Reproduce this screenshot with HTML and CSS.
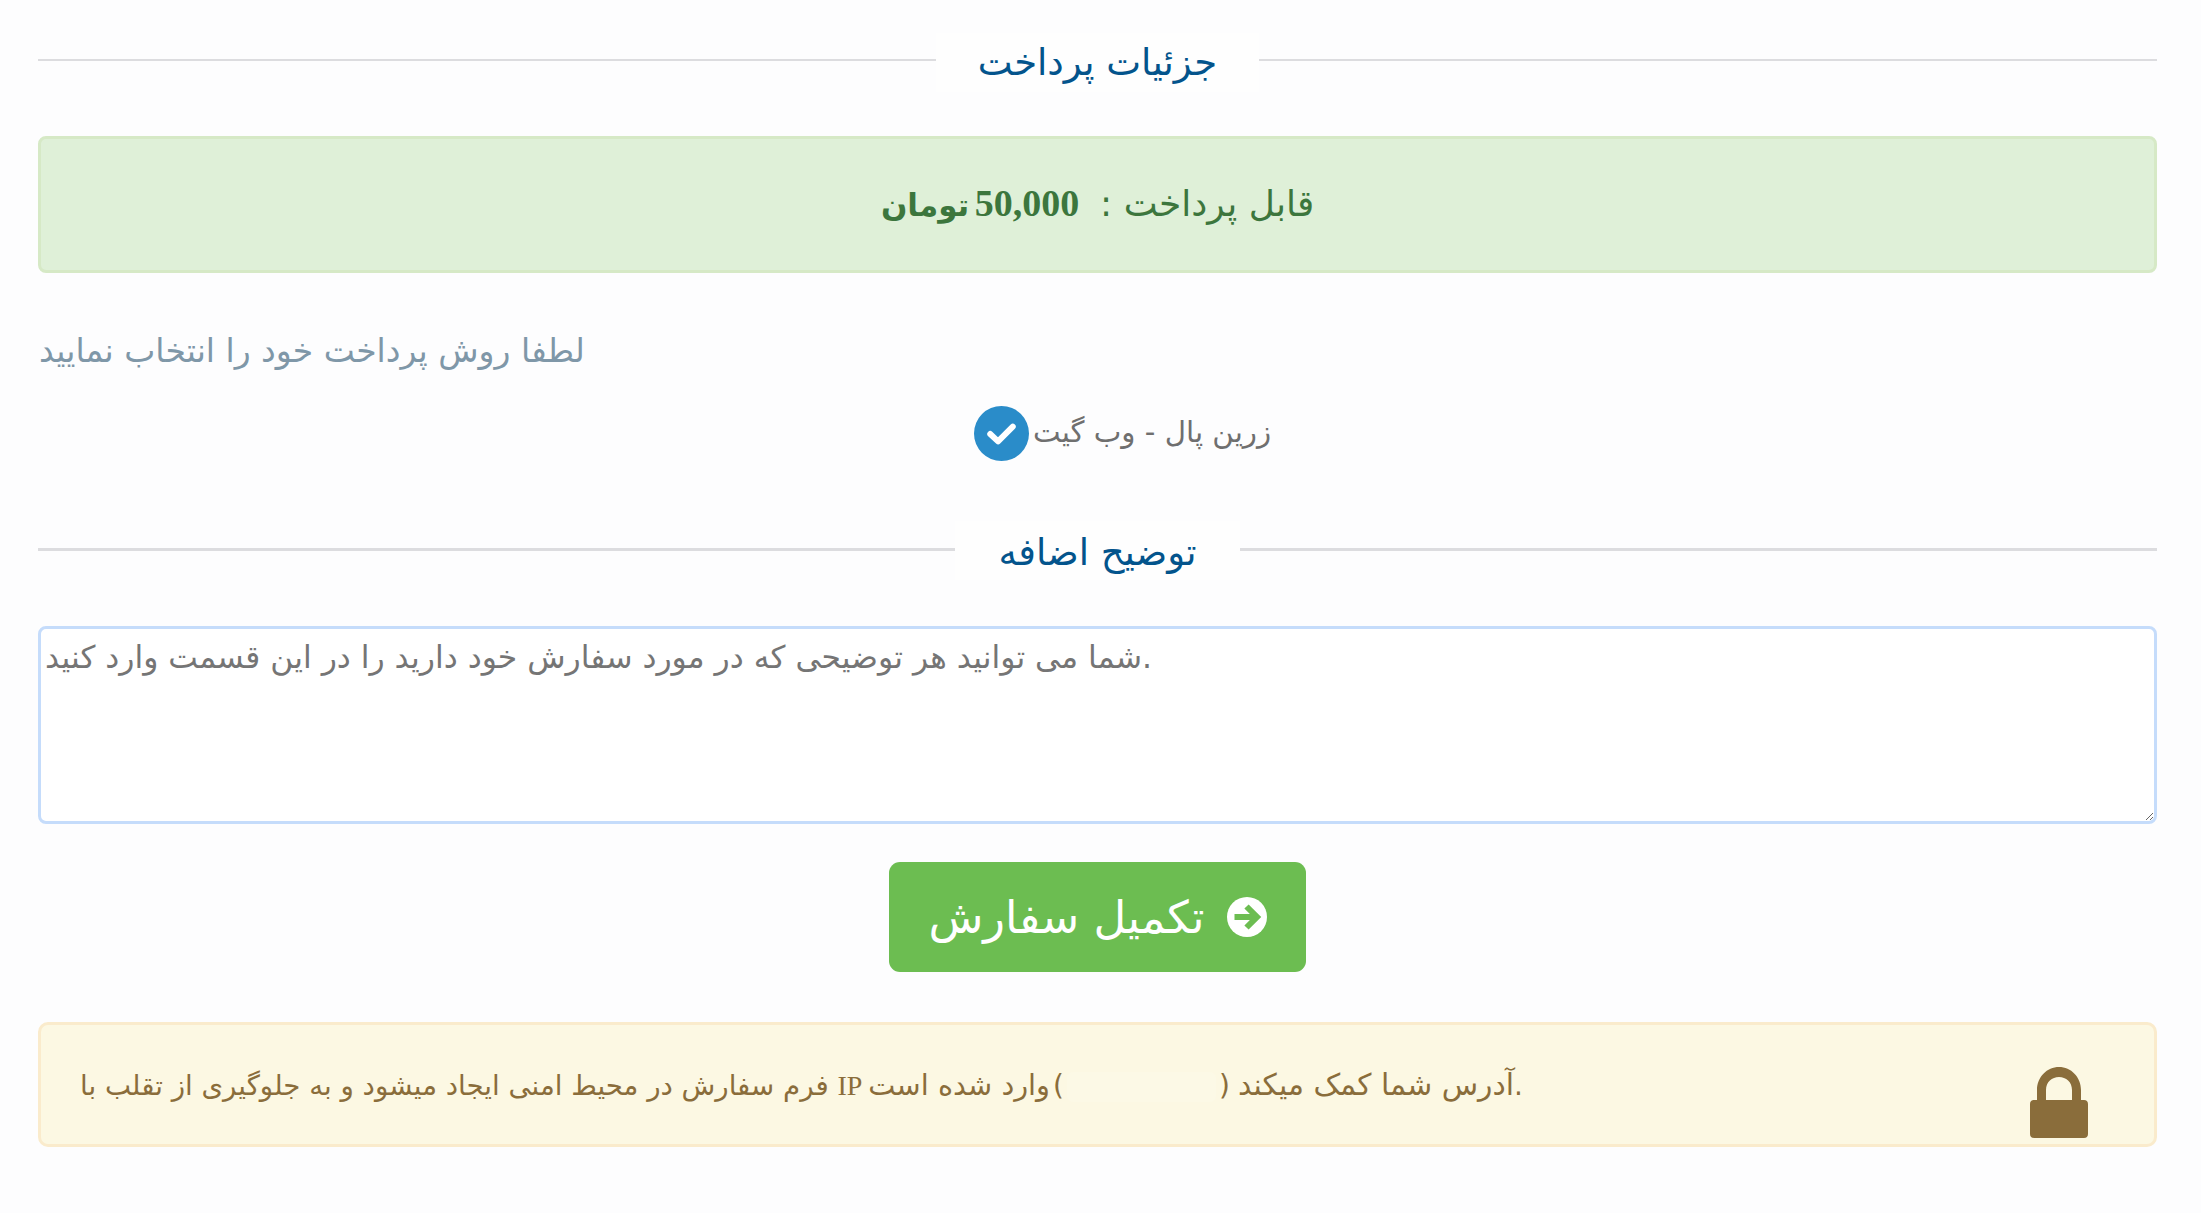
FILE: index.html
```html
<!DOCTYPE html>
<html lang="fa">
<head>
<meta charset="utf-8">
<title>جزئیات پرداخت</title>
<link rel="stylesheet" href="styles.css">
</head>
<body>
<main class="page">
  <div class="divider divider-first"><span class="divider-title">جزئیات پرداخت</span></div>
  <div class="payable"><span dir="rtl" class="payable-text">قابل پرداخت : &nbsp;<b class="amount">50,000</b> <b class="currency">تومان</b></span></div>
  <p class="choose">لطفا روش پرداخت خود را انتخاب نمایید</p>
  <div class="gateway">
    <svg class="check" viewBox="0 0 56 56" aria-hidden="true"><circle cx="28" cy="28" r="28" fill="#2a8cc9"/><path d="M16.5 28.5 L24.5 36 L39.5 21" fill="none" stroke="#fff" stroke-width="6" stroke-linecap="round" stroke-linejoin="round"/></svg>
    <span class="gateway-name">زرین پال - وب گیت</span>
  </div>
  <div class="divider divider-second"><span class="divider-title title-wide">توضیح اضافه</span></div>
  <textarea class="notes" placeholder="شما می توانید هر توضیحی که در مورد سفارش خود دارید را در این قسمت وارد کنید."></textarea>
  <div class="actions">
    <button class="submit" type="button">
      <span class="submit-label">تکمیل سفارش</span>
      <svg class="arrow" viewBox="0 0 40 40" aria-hidden="true"><circle cx="20" cy="20" r="20" fill="#fff"/><path d="M7.500 20 H28 M19.500 9.500 L30 20 L19.500 30.500" fill="none" stroke="#6cbd51" stroke-width="6" stroke-linejoin="miter"/></svg>
    </button>
  </div>
  <div class="secure">
    <p class="secure-text"><bdi class="run-first">فرم سفارش در محیط امنی ایجاد میشود و به جلوگیری از تقلب با</bdi> <span class="latin">IP</span> <bdi class="run-middle">وارد شده است</bdi><bdi dir="ltr" class="paren">(</bdi><span class="ip"></span><bdi dir="ltr" class="paren">)</bdi><bdi class="run-last">آدرس شما کمک میکند</bdi>.</p>
    <svg class="lock" viewBox="0 0 58 71" aria-hidden="true"><path fill="#8a6d3b" fill-rule="evenodd" d="M7 33V23C7 10 17 0 29 0S51 10 51 23V33H54C56.500 33 58 34.500 58 37V67C58 69.500 56.500 71 54 71H4C1.500 71 0 69.500 0 67V37C0 34.500 1.500 33 4 33ZM16 33H42V23C42 15 36 10 29 10S16 15 16 23Z"/></svg>
  </div>
</main>
</body>
</html>
```
FILE: styles.css
```css
html, body { margin: 0; padding: 0; }
body {
  background: #fdfdfe;
  font-family: "DejaVu Sans", sans-serif;
  color: #6f6f6f;
}
.page {
  padding: 33px 44px 0 38px;
  display: flex;
  flex-direction: column;
}
.divider {
  display: flex;
  align-items: center;
  justify-content: center;
  height: 59px;
}
.divider::before, .divider::after {
  content: "";
  flex: 1;
  height: 2px;
  background: #dcdcdf;
  margin-top: -5px;
}
.divider-second::before, .divider-second::after { height: 3px; margin-top: -2px; }
.divider-title {
  background: #fefefe;
  color: #03548c;
  font-size: 37px;
  line-height: 59px;
  height: 59px;
  text-align: center;
  direction: rtl;
  width: 323px;
}
.title-wide { width: 285px; line-height: 63px; }
.payable {
  margin-top: 44px;
  height: 137px;
  box-sizing: border-box;
  background: #dff0d8;
  border: 3px solid #d6e9c6;
  border-radius: 8px;
  color: #3c763d;
  font-size: 36px;
  display: flex;
  align-items: center;
  justify-content: center;
  padding-bottom: 3px;
}
.amount { font-family: "Liberation Serif", serif; font-weight: 700; font-size: 38px; margin-right: -2px; margin-left: -6px; }
.currency { font-size: 31px; }
.choose {
  margin: 56px 0 0;
  padding-left: 1px;
  color: #7f97a8;
  font-size: 33px;
  line-height: 44px;
  text-align: left;
  unicode-bidi: plaintext;
}
.gateway {
  display: flex;
  align-items: center;
  justify-content: center;
  gap: 4px;
  margin-top: 33px;
  height: 55px;
  padding-left: 52px;
}
.check { width: 55px; height: 55px; flex: none; margin-left: -2px; }
.gateway-name { font-size: 29.300px; direction: rtl; margin-bottom: 4px; }
.divider-second { margin-top: 60px; }
.notes {
  display: block;
  margin-top: 46px;
  height: 198px;
  box-sizing: border-box;
  width: 100%;
  border: 3px solid #c5dcfb;
  border-radius: 8px;
  background: #fff;
  padding: 6px 4px 3px;
  font-family: "DejaVu Sans", sans-serif;
  font-size: 31.400px;
  line-height: 44px;
  color: #6f6f6f;
}
.notes::placeholder { color: #757575; opacity: 1; }
.actions { display: flex; justify-content: center; margin-top: 38px; }
.submit {
  width: 417px;
  height: 110px;
  border: 0;
  border-radius: 11px;
  background: #6cbd51;
  color: #fff;
  display: flex;
  align-items: center;
  justify-content: center;
  gap: 22px;
  font-family: "DejaVu Sans", sans-serif;
  font-size: 45px;
  padding: 0;
}
.submit-label { direction: rtl; }
.arrow { width: 40px; height: 40px; flex: none; }
.secure {
  margin-top: 50px;
  height: 125px;
  box-sizing: border-box;
  background: #fcf8e3;
  border: 3px solid #faebcc;
  border-radius: 10px;
  padding: 0 66px 0 39px;
  display: flex;
  align-items: center;
  justify-content: space-between;
  color: #8a6d3b;
}
.secure-text { margin: 2px 0 0; font-size: 28px; line-height: 40px; }
.run-first { font-size: 27.650px; }
.run-middle { font-size: 28.800px; }
.run-last { font-size: 29.800px; margin-left: 5px; }
.latin { font-family: "Liberation Serif", serif; font-size: 28px; margin-right: -3px; }
.paren { padding: 0 3px; }
.ip { display: inline-block; width: 149px; height: 30px; vertical-align: middle; background: #fcf9e6; border-radius: 6px; }
.lock { width: 58px; height: 71px; flex: none; margin-top: 36px; }
```
